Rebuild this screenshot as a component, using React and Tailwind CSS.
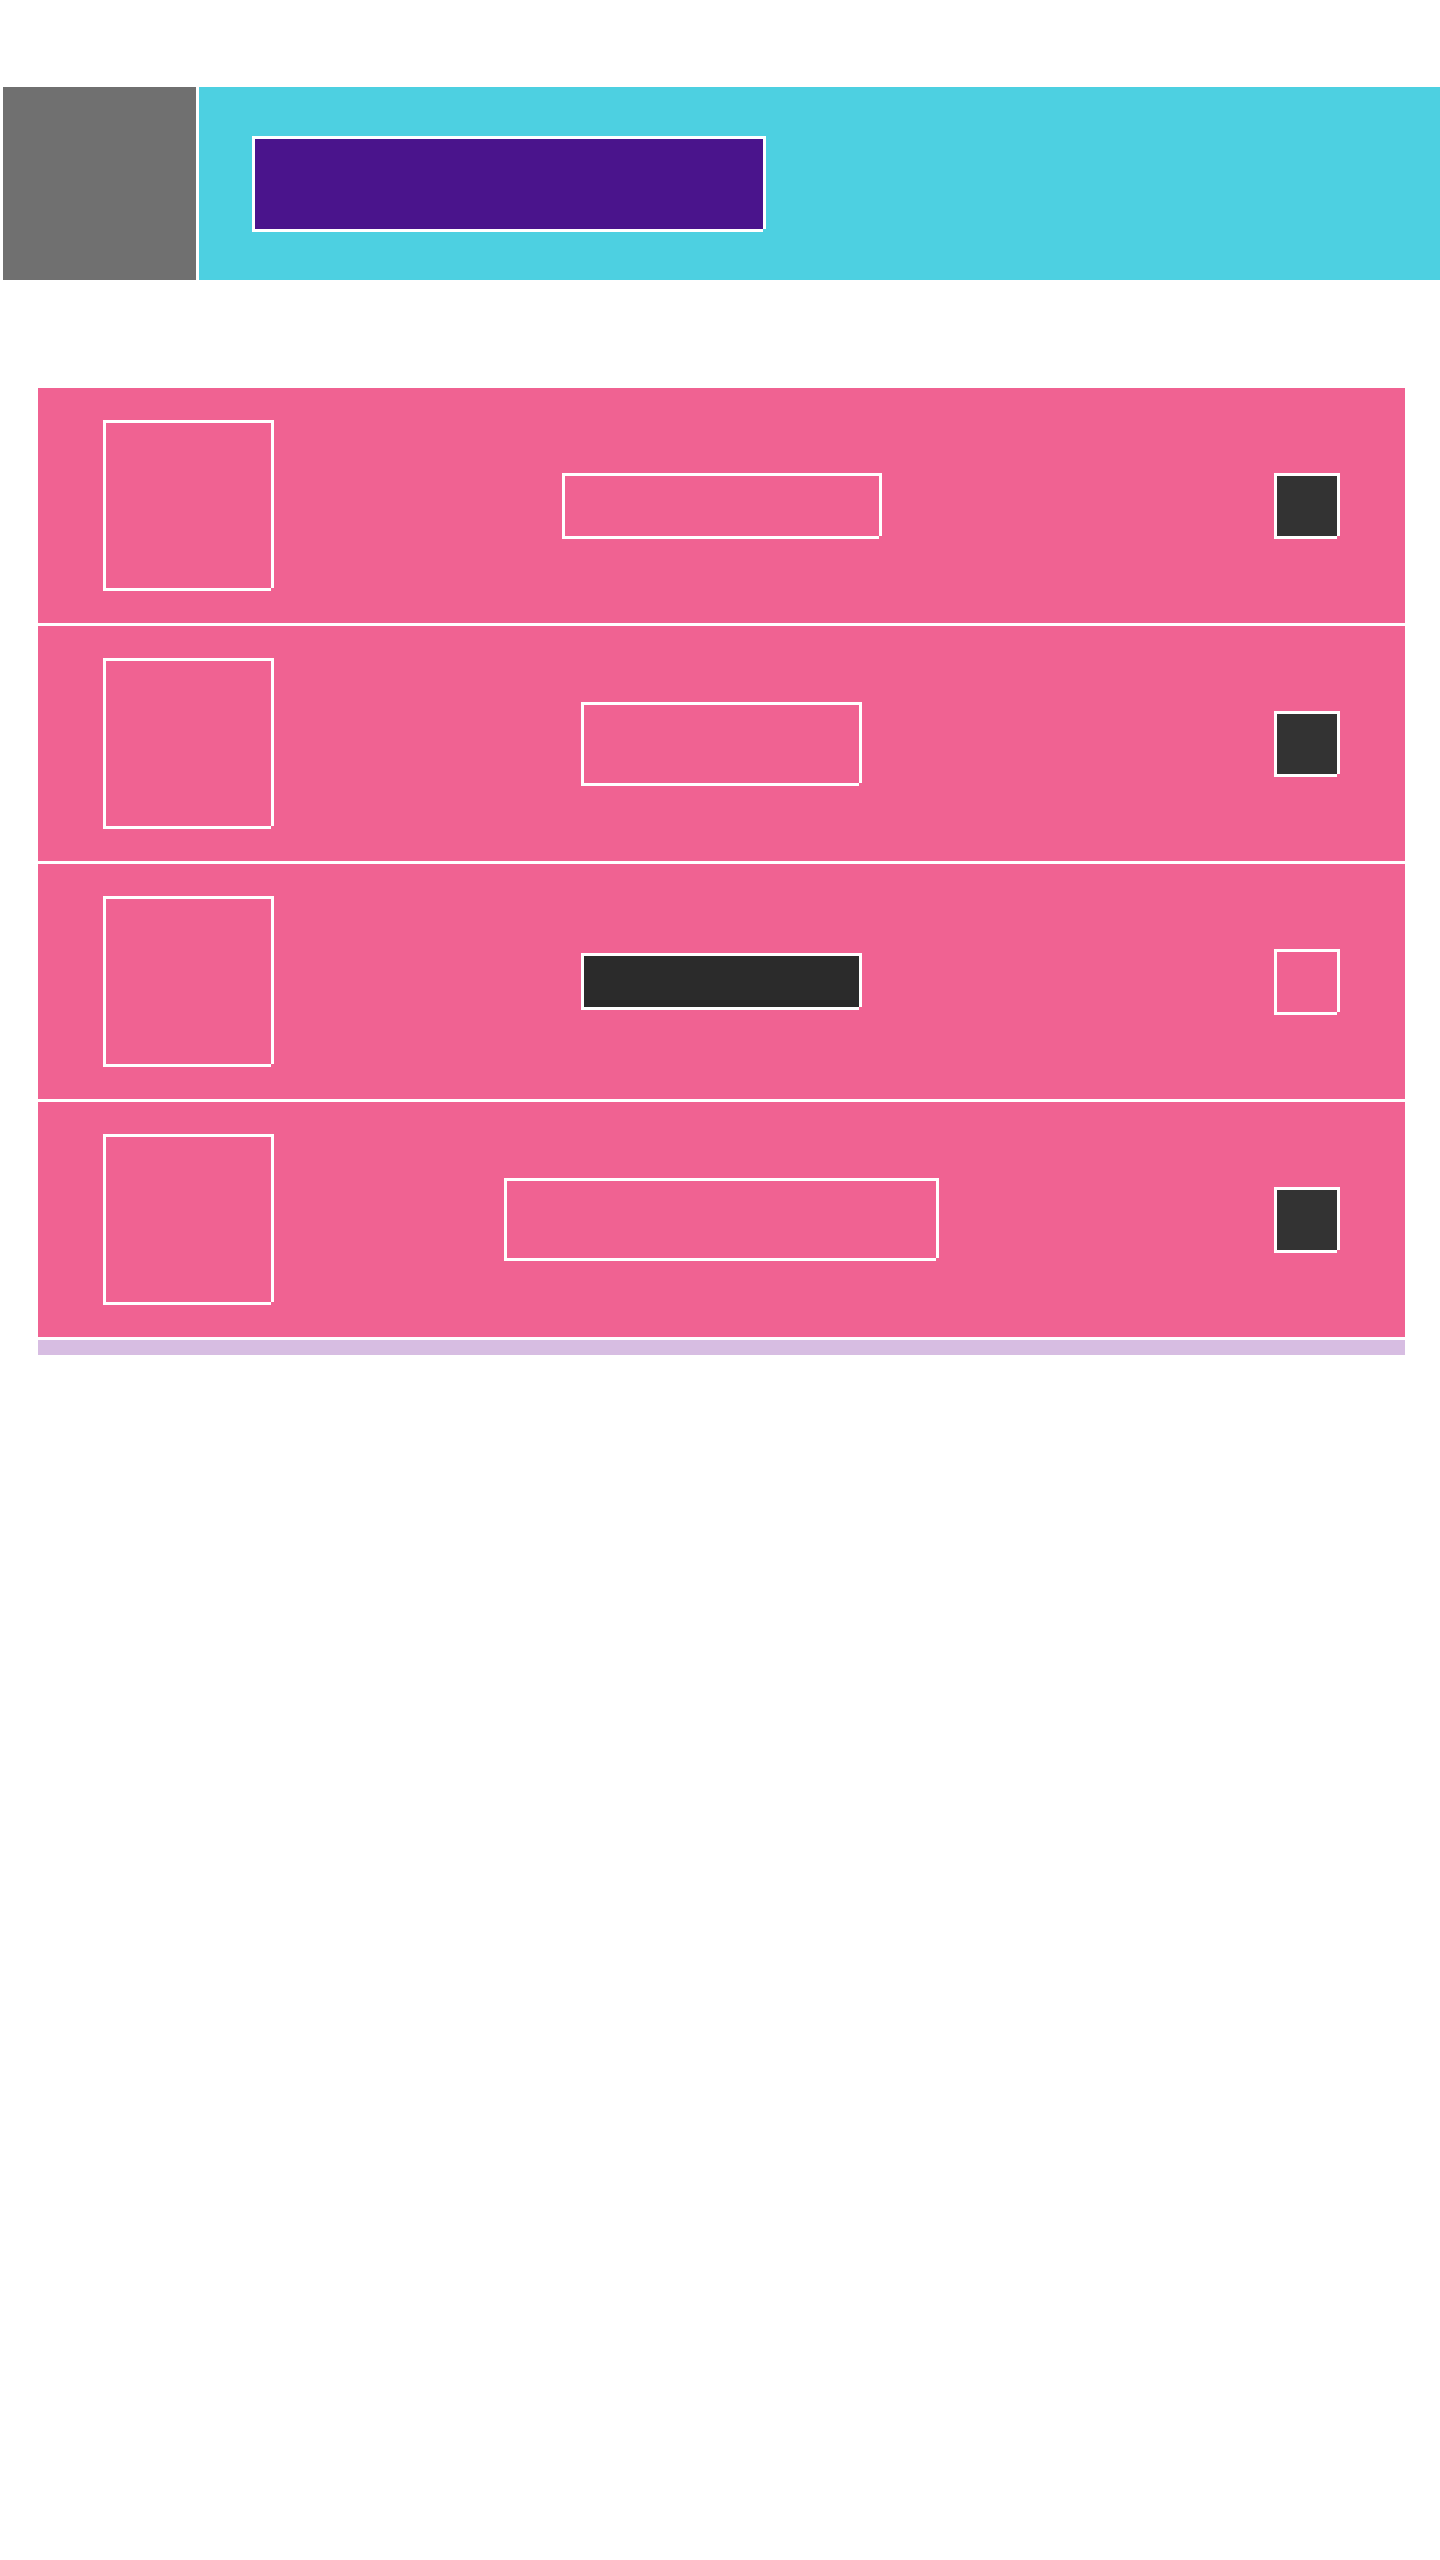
import React from 'react'

const rows = [
  { mid: 'w-[317px] h-[63px]', midFill: '', check: true },
  { mid: 'w-[278px] h-[81px]', midFill: '', check: true },
  { mid: 'w-[278px] h-[54px]', midFill: 'bg-[#2b2b2b]', check: false },
  { mid: 'w-[432px] h-[80px]', midFill: '', check: true },
]

// white frame with the bottom-right corner left open
const frame = 'border-t-[3px] border-l-[3px] border-white shadow-[3px_0_0_#fff,0_3px_0_#fff] mr-[3px] mb-[3px]'

function Row({ row }) {
  return (
    <div className="grid h-[238px] grid-cols-[1fr_auto_1fr] items-center border-b-[3px] border-white px-[65px]">
      <div className={`justify-self-start w-[168px] h-[168px] ${frame}`} />
      <div className={`${row.mid} ${row.midFill} ${frame}`} />
      <div className={`justify-self-end w-[63px] h-[63px] ${row.check ? 'bg-[#333333]' : ''} ${frame}`} />
    </div>
  )
}

export default function App() {
  return (
    <div className="min-h-[2560px] bg-white pl-[3px] pt-[87px]">
      {/* Header */}
      <div className="flex h-[193px] gap-[3px]">
        <div className="w-[193px] bg-[#707070]" />
        <div className="flex flex-1 items-center bg-[#4dd0e1] pl-[53px]">
          <div className={`w-[511px] h-[93px] bg-[#4a148c] ${frame}`} />
        </div>
      </div>

      {/* List */}
      <div className="mx-[35px] mt-[108px]">
        <div className="bg-[#f06292]">
          {rows.map((row, i) => (
            <Row key={i} row={row} />
          ))}
        </div>
        <div className="h-[15px] bg-[#d7bde2]" />
      </div>
    </div>
  )
}
